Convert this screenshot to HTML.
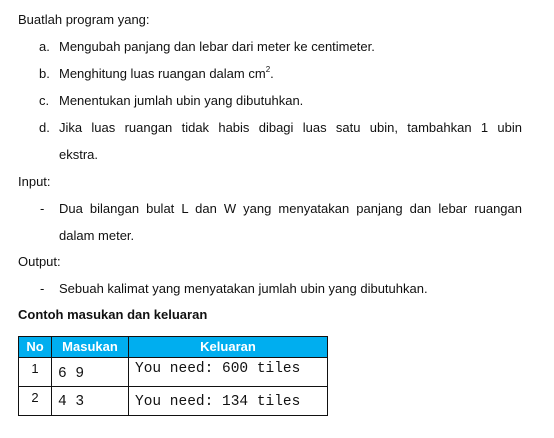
<!DOCTYPE html>
<html><head><style>
body{margin:0;width:554px;height:438px;background:#fff;font-family:"Liberation Sans",sans-serif;font-size:13px;color:#111;position:relative;overflow:hidden}
.l{position:absolute;white-space:nowrap;line-height:16px}
.j{text-align:justify;text-align-last:justify;white-space:normal}
table{position:absolute;left:18px;top:336px;border-collapse:collapse;}
td,th{border:1.5px solid #111;padding:0;}
th{background:#00aeef;color:#fff;font-weight:bold;font-size:13px;height:20px;line-height:20px;vertical-align:middle}
td{font-family:"Liberation Mono",monospace;font-size:14.5px;line-height:16px;vertical-align:top}
td div{height:28px;overflow:hidden;box-sizing:border-box}
</style></head><body>
<div class="l" style="left:18px;top:12px">Buatlah program yang:</div>
<div class="l" style="left:39px;top:39px">a.</div><div class="l" style="left:59px;top:39px">Mengubah panjang dan lebar dari meter ke centimeter.</div>
<div class="l" style="left:39px;top:66px">b.</div><div class="l" style="left:59px;top:66px">Menghitung luas ruangan dalam cm<sup style="font-size:8px;vertical-align:6px;line-height:0">2</sup>.</div>
<div class="l" style="left:39px;top:93px">c.</div><div class="l" style="left:59px;top:93px">Menentukan jumlah ubin yang dibutuhkan.</div>
<div class="l" style="left:39px;top:120px">d.</div><div class="l j" style="left:59px;top:120px;width:463px">Jika luas ruangan tidak habis dibagi luas satu ubin, tambahkan 1 ubin</div>
<div class="l" style="left:59px;top:147px">ekstra.</div>
<div class="l" style="left:18px;top:174px">Input:</div>
<div class="l" style="left:40px;top:201px">-</div><div class="l j" style="left:59px;top:201px;width:463px">Dua bilangan bulat L dan W yang menyatakan panjang dan lebar ruangan</div>
<div class="l" style="left:59px;top:228px">dalam meter.</div>
<div class="l" style="left:18px;top:254px">Output:</div>
<div class="l" style="left:40px;top:281px">-</div><div class="l" style="left:59px;top:281px">Sebuah kalimat yang menyatakan jumlah ubin yang dibutuhkan.</div>
<div class="l" style="left:18px;top:307px;font-weight:bold">Contoh masukan dan keluaran</div>
<table>
<tr><th style="width:32px">No</th><th style="width:76px">Masukan</th><th style="width:198px">Keluaran</th></tr>
<tr><td style="text-align:center;font-family:'Liberation Sans',sans-serif;font-size:13px"><div style="padding-top:3px">1</div></td><td><div style="padding:8px 0 0 6px">6 9</div></td><td><div style="padding:3px 0 0 6px">You need: 600 tiles</div></td></tr>
<tr><td style="text-align:center;font-family:'Liberation Sans',sans-serif;font-size:13px"><div style="padding-top:3px">2</div></td><td><div style="padding:7px 0 0 6px">4 3</div></td><td><div style="padding:7px 0 0 6px">You need: 134 tiles</div></td></tr>
</table>
</body></html>
